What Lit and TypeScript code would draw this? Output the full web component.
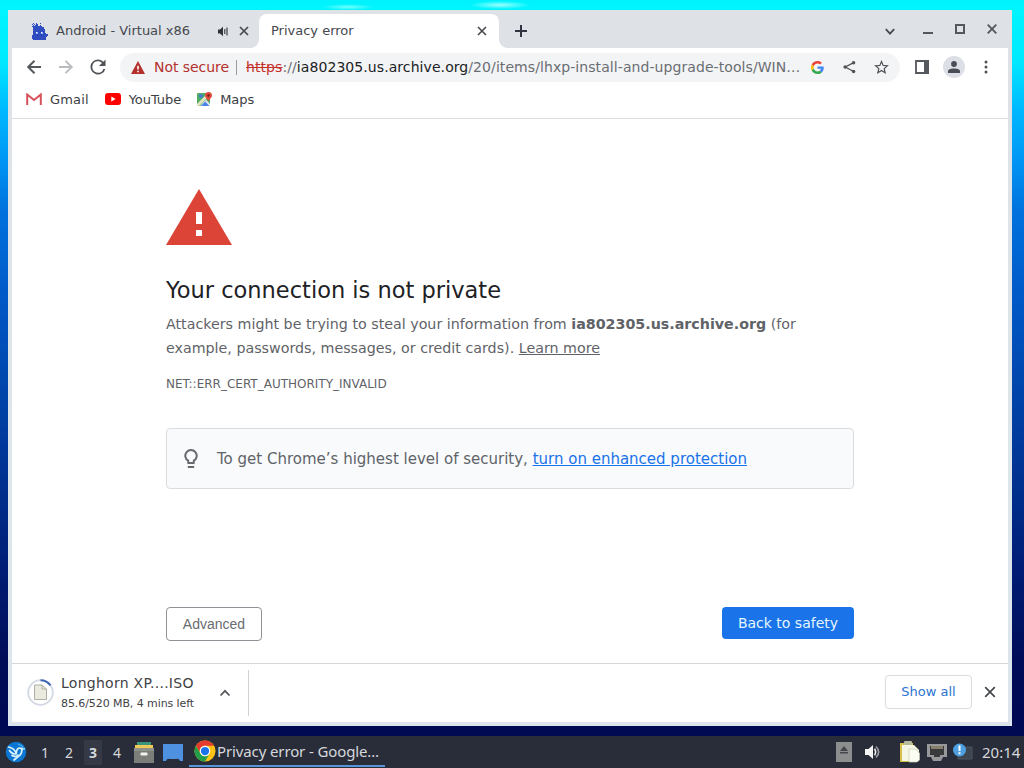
import { LitElement, html, css, svg } from "lit";
import { customElement } from "lit/decorators.js";

const closeGlyph = (size: number, weight: number) => html`<svg width=${size} height=${size} viewBox="0 0 10 10" fill="none" stroke="#45484c" stroke-width=${weight}><path d="M1 1L9 9M9 1L1 9" /></svg>`;

/* Favicon of the first tab, one string per pixel row. */
const droidRows = [
  "..b..b..b.......",
  ".b.b.bb.........",
  "..b.bbb.b.......",
  ".bbbbbbbbb......",
  "..bbbbbbbbbb....",
  "..bbbbbbbbbb....",
  "..bbbbbbbbbbb...",
  "..bbbbbbbbbbb...",
  "..bbbwlbbwlbb...",
  "..bbbllbbllbbb..",
  "..bbbbbbbbbbbbbb",
  ".bbbbbdbbdbbbbbb",
  ".bbbbbbbbbbbbbb.",
  ".bbbbbbbbbbbbb..",
  ".bbbbbbbbbbbbb..",
  "..bbbbbbbbbbbb..",
];
const droidFill: Record<string, string> = { b: "#2f4dc0", w: "#ffffff", l: "#8fb4f5", d: "#1a2f88" };

const chromeLogo = html`<svg width="22" height="22" viewBox="0 0 48 48">
  <circle cx="24" cy="24" r="23" fill="#fbc116" />
  <path d="M4.1 12.5A23 23 0 0 1 43.9 12.5H24A11.5 11.5 0 0 0 14 29.7Z" fill="#e33b2e" />
  <path d="M4.1 12.5A23 23 0 0 0 24 47L34 29.7A11.5 11.5 0 0 1 14 29.7Z" fill="#229e4b" />
  <circle cx="24" cy="24" r="11.5" fill="#fff" /><circle cx="24" cy="24" r="9" fill="#1a73e8" />
</svg>`;

@customElement("tab-strip")
export class TabStrip extends LitElement {
  static styles = css`
    :host { display: flex; height: 38px; background: #dee1e6; color: #45484c; font-size: 13px; }
    svg { display: block; flex: none; }
    .tab { display: flex; align-items: center; height: 34px; margin-top: 4px; box-sizing: border-box; }
    .idle { width: 251px; padding-left: 23px; }
    .idle .name { width: 161px; margin-left: 8px; }
    .idle .snd { margin-right: 10px; }
    .live { width: 240px; background: #fff; border-radius: 8px 8px 0 0; padding: 0 12px 0 12px; justify-content: space-between; position: relative; }
    .live::before, .live::after { content: ""; position: absolute; bottom: 0; width: 8px; height: 8px; }
    .live::before { left: -8px; background: radial-gradient(circle at 0 0, transparent 7.5px, #fff 8px); }
    .live::after { right: -8px; background: radial-gradient(circle at 100% 0, transparent 7.5px, #fff 8px); }
    .name { white-space: nowrap; line-height: 18px; padding-bottom: 1px; }
    .plus { margin: 15px 0 0 16px; }
    .win { display: flex; margin: 13px 15px 0 auto; align-items: center; height: 14px; }
    .min { margin: 6px 22px 0 0; }
    .down { margin: 3px 28px 0 0; }
    .max { margin: -2px 22px 0 0; }
    .quit { margin-top: -2px; }
  `;
  render() {
    return html`
      <div class="tab idle">
        <svg width="17" height="17" viewBox="0 0 16 16" shape-rendering="crispEdges">
          ${droidRows.map((row, y) => [...row].map((c, x) => c === "." ? null : svg`<rect x=${x} y=${y} width="1.05" height="1.05" fill=${droidFill[c]} />`))}
        </svg>
        <span class="name">Android - Virtual x86</span>
        <svg class="snd" width="12" height="11" viewBox="0 0 12 11"><path d="M1 3.5H3L6 .8V10.2L3 7.5H1Z" fill="#303338" /><path d="M7.8 3V8M10 1.5V9.5" stroke="#303338" stroke-width="1.1" /></svg>
        ${closeGlyph(10, 1.7)}
      </div>
      <div class="tab live"><span class="name">Privacy error</span>${closeGlyph(10, 1.6)}</div>
      <svg class="plus" width="12" height="12" viewBox="0 0 12 12"><path d="M6 0V12M0 6H12" stroke="#303440" stroke-width="2" /></svg>
      <div class="win">
        <svg class="down" width="10" height="8" viewBox="0 0 10 8"><path d="M.8 1.2L5 5.6L9.2 1.2" fill="none" stroke="#45484c" stroke-width="1.8" /></svg>
        <svg class="min" width="10" height="2"><rect width="10" height="2" fill="#55585e" /></svg>
        <svg class="max" width="10" height="10"><rect x="1" y="1" width="8" height="8" fill="none" stroke="#55585e" stroke-width="2" /></svg>
        <svg class="quit" width="10" height="10" viewBox="0 0 10 10"><path d="M.7 .7L9.3 9.3M9.3 .7L.7 9.3" stroke="#55585e" stroke-width="1.9" /></svg>
      </div>`;
  }
}

@customElement("nav-bar")
export class NavBar extends LitElement {
  static styles = css`
    :host { display: block; height: 71px; box-sizing: border-box; border-bottom: 1px solid #dadce0; background: #fff; margin: 0 4px; color: #3c4043; }
    svg { display: block; flex: none; }
    .row { display: flex; align-items: center; height: 38px; padding-left: 14px; }
    .gap { margin-left: 16px; }
    .omni { display: flex; align-items: center; width: 780px; height: 29px; border-radius: 15px; background: #f3f4f5; margin-left: 14px; padding-left: 11px; box-sizing: border-box; }
    .warn { color: #b3302c; font-size: 14px; width: 76px; margin-left: 9px; white-space: nowrap; letter-spacing: -0.05px; }
    .bar { width: 1px; height: 15px; background: #9a9da1; margin: 0 9px 0 6px; }
    .url { font-size: 14px; width: 554px; white-space: nowrap; color: #6a6e73; letter-spacing: 0.075px; }
    .url b { font-weight: 400; color: #202124; }
    .url s { color: #c5302b; }
    .goog { margin-left: 11px; }
    .share { margin-left: 19px; }
    .star { margin-left: 18px; }
    .side { margin-left: 15px; }
    .dots { margin-left: 19px; }
    .marks { display: flex; height: 26px; align-items: center; padding-left: 14px; font-size: 13px; }
    .marks span { margin-left: 8px; white-space: nowrap; }
    .gm { letter-spacing: .15px; }
    .yt, .mp { letter-spacing: -.05px; }
    .face { width: 22px; height: 22px; border-radius: 50%; background: #dcdfe6; display: grid; place-items: center; margin-left: 14px; }
  `;
  render() {
    return html`
      <div class="row">
        <svg width="16" height="16" viewBox="0 0 16 16" fill="none" stroke="#55585c" stroke-width="2"><path d="M15 8H2.2M8.5 1.8L2.2 8L8.5 14.2" /></svg>
        <svg class="gap" width="16" height="16" viewBox="0 0 16 16" fill="none" stroke="#b9bbbd" stroke-width="1.8"><path d="M1 8H13.8M7.5 1.8L13.8 8L7.5 14.2" /></svg>
        <svg class="gap" width="16" height="16" viewBox="3.5 3.5 17 17"><path fill="#505357" d="M17.65 6.35A7.96 7.96 0 0 0 12 4a8 8 0 1 0 7.73 10h-2.08A6 6 0 1 1 12 6c1.66 0 3.14.69 4.22 1.78L13 11h7V4z" /></svg>
        <div class="omni">
          <svg width="14" height="13" viewBox="0 0 14 13"><path d="M7 0L14 13H0Z" fill="#b3302c" /><path d="M6.2 4.8H7.8V8.6H6.2ZM6.2 9.7H7.8V11.3H6.2Z" fill="#fff" /></svg>
          <span class="warn">Not secure</span><i class="bar"></i>
          <span class="url"><s>https</s>://<b>ia802305.us.archive.org</b>/20/items/lhxp-install-and-upgrade-tools/WIN…</span>
          <svg class="goog" width="13" height="13" viewBox="0 0 48 48"><path fill="#EA4335" d="M24 9.5c3.54 0 6.71 1.22 9.21 3.6l6.85-6.85C35.9 2.38 30.47 0 24 0 14.62 0 6.51 5.38 2.56 13.22l7.98 6.19C12.43 13.72 17.74 9.5 24 9.5z"/><path fill="#4285F4" d="M46.98 24.55c0-1.57-.15-3.09-.38-4.55H24v9.02h12.94c-.58 2.96-2.26 5.48-4.78 7.18l7.73 6c4.51-4.18 7.09-10.36 7.09-17.65z"/><path fill="#FBBC05" d="M10.53 28.59c-.48-1.45-.76-2.99-.76-4.59s.27-3.14.76-4.59l-7.98-6.19C.92 16.46 0 20.12 0 24c0 3.88.92 7.54 2.56 10.78l7.97-6.19z"/><path fill="#34A853" d="M24 48c6.48 0 11.93-2.13 15.89-5.81l-7.73-6c-2.15 1.45-4.92 2.3-8.16 2.3-6.26 0-11.57-4.22-13.47-9.91l-7.98 6.19C6.51 42.62 14.62 48 24 48z"/></svg>
          <svg class="share" width="13" height="14" viewBox="0 0 14 14"><path d="M11 2.6L2.5 7L11 11.6" fill="none" stroke="#505357" stroke-width="1.4" /><g fill="#505357"><circle cx="11.4" cy="2.4" r="1.9" /><circle cx="2.3" cy="7" r="1.9" /><circle cx="11.4" cy="11.8" r="1.9" /></g></svg>
          <svg class="star" width="15" height="14" viewBox="2 2 20 19"><path fill="#4d5054" d="M22 9.24l-7.19-.62L12 2 9.19 8.63 2 9.24l5.46 4.73L5.82 21 12 17.27 18.18 21l-1.63-7.03L22 9.24zM12 15.4l-3.76 2.27 1-4.28-3.32-2.88 4.38-.38L12 6.1l1.71 4.04 4.38.38-3.32 2.88 1 4.28L12 15.4z" /></svg>
        </div>
        <svg class="side" width="14" height="14"><path d="M1 1H13V13H1Z" fill="none" stroke="#55585c" stroke-width="1.8" /><rect x="9" width="5" height="14" fill="#55585c" /></svg>
        <div class="face"><svg width="12" height="12"><circle cx="6" cy="3" r="2.9" fill="#4a4d58" /><path d="M0 12V10C0 6.6 12 6.6 12 10V12Z" fill="#4a4d58" /></svg></div>
        <svg class="dots" width="4" height="14" fill="#505357"><circle cx="2" cy="2" r="1.5" /><circle cx="2" cy="7" r="1.5" /><circle cx="2" cy="12" r="1.5" /></svg>
      </div>
      <div class="marks">
        <svg width="16" height="12" viewBox="0 0 16 12"><path d="M1.2 12V1.5L8 7L14.8 1.5V12" fill="none" stroke="#d5505a" stroke-width="2" /></svg><span class="gm">Gmail</span>
        <svg class="gap" width="16" height="12"><rect width="16" height="12" rx="3" fill="#f00" /><path d="M6.3 3.4L10.6 6L6.3 8.6Z" fill="#fff" /></svg><span class="yt">YouTube</span>
        <svg class="gap" width="15" height="15" viewBox="0 0 15 15"><rect y="1" width="13" height="13" rx="1" fill="#4fae62" /><path d="M3 14L9 7.5L13 12V14Z" fill="#dfe5ee" /><path d="M0 12L9 3L11 5L2 14H0Z" fill="#e7e3c4" /><path d="M4 14L8.2 9.6L12.3 14Z" fill="#4a83e6" /><path d="M2 2.5H6V4A2 2 0 1 1 2 4Z" fill="#4577d5" /><path d="M11.5 10C11 7 8 6 8 3.5A3.5 3.5 0 0 1 15 3.5C15 6 12 7 11.5 10Z" fill="#dd4b3e" /><circle cx="11.5" cy="3.5" r="1.2" fill="#7c1c17" /></svg><span class="mp">Maps</span>
      </div>`;
  }
}

@customElement("warning-page")
export class WarningPage extends LitElement {
  static styles = css`
    :host { display: flex; flex-direction: column; box-sizing: border-box; height: 544px; margin: 0 4px; padding: 70px 154px 0; background: #fff; color: #5f6368; }
    svg { display: block; flex: none; }
    h1 { font-size: 22.5px; line-height: 28px; font-weight: 400; color: #202124; margin: 31px 0 8px; white-space: nowrap; }
    p { margin: 0; font-size: 14.25px; line-height: 24px; white-space: nowrap; }
    .code { font-size: 12px; line-height: 18px; margin: 15px 0 35px; white-space: nowrap; }
    .tip { display: flex; align-items: center; box-sizing: border-box; height: 61px; border: 1px solid #dadce0; border-radius: 4px; background: #f8fafc; padding-left: 17px; font-size: 15px; }
    .tip span { margin-left: 19px; white-space: nowrap; }
    .tip u { color: #1a73e8; }
    .acts { display: flex; justify-content: space-between; margin-top: 118px; }
    button { box-sizing: border-box; border-radius: 4px; font-size: 14px; padding: 0; white-space: nowrap; }
    .adv { width: 96px; height: 34px; border: 1px solid #8f9296; background: #fff; color: #696c70; font-family: "Liberation Sans", sans-serif; }
    .safe { width: 132px; height: 32px; border: 0; background: #1a73e8; color: #e4f7fd; font-family: "DejaVu Sans", sans-serif; }
  `;
  render() {
    return html`
      <svg width="66" height="56" viewBox="0 0 66 56"><path d="M33 0L66 56H0Z" fill="#db4437" /><path d="M30 23H36V35H30ZM30 41H36V47H30Z" fill="#fff" /></svg>
      <h1>Your connection is not private</h1>
      <p>Attackers might be trying to steal your information from <b>ia802305.us.archive.org</b> (for<br />example, passwords, messages, or credit cards). <u>Learn more</u></p>
      <div class="code">NET::ERR_CERT_AUTHORITY_INVALID</div>
      <div class="tip">
        <svg width="14" height="20" viewBox="0 0 14 20"><path d="M4.2 14V11.7A5.7 5.7 0 1 1 9.8 11.7V14Z" fill="none" stroke="#666a6f" stroke-width="2" stroke-linejoin="round" /><path d="M3.8 18H10.2" stroke="#666a6f" stroke-width="2" /></svg>
        <span>To get Chrome’s highest level of security, <u>turn on enhanced protection</u></span>
      </div>
      <div class="acts"><button class="adv">Advanced</button><button class="safe">Back to safety</button></div>`;
  }
}

@customElement("download-shelf")
export class DownloadShelf extends LitElement {
  static styles = css`
    :host { display: flex; align-items: center; box-sizing: border-box; height: 59px; border-top: 1px solid #d5d7da; margin: 0 4px; padding: 0 12px 0 15px; background: #fff; color: #3f4246; }
    svg { display: block; flex: none; }
    .ring { margin-bottom: 2px; }
    .txt { width: 158px; margin-left: 7px; white-space: nowrap; }
    .name { font-size: 14px; line-height: 18px; letter-spacing: .27px; margin-top: -1px; }
    .size { font-size: 11px; line-height: 16px; margin-top: 4px; letter-spacing: -.08px; }
    .rule { width: 1px; height: 46px; background: #cfd1d4; margin-left: 17px; }
    .all { display: grid; place-items: center; box-sizing: border-box; width: 87px; height: 34px; border: 1px solid #dadce0; border-radius: 4px; color: #2c74cf; font-size: 13px; margin: 0 12px 2px auto; padding-bottom: 1px; }
    .shut { margin-bottom: 2px; }
  `;
  render() {
    return html`
      <svg class="ring" width="27" height="27" viewBox="0 0 27 27" fill="none"><circle cx="13.5" cy="13.5" r="12.3" stroke="#d3d8e4" stroke-width="1.8" /><path d="M13.5 1.2A12.3 12.3 0 0 1 23.5 6.3" stroke="#4067b5" stroke-width="2" /><path d="M7.5 6H15L19.5 10V20.5H7.5Z" fill="#ebeade" stroke="#aeb0a5" /><path d="M15 6V10H19.5" stroke="#aeb0a5" /></svg>
      <div class="txt"><div class="name">Longhorn XP....ISO</div><div class="size">85.6/520 MB, 4 mins left</div></div>
      <svg width="12" height="8" viewBox="0 0 12 8" fill="none" stroke="#55585c" stroke-width="1.8"><path d="M1.5 6.5L6 1.8L10.5 6.5" /></svg>
      <i class="rule"></i>
      <div class="all">Show all</div>
      <div class="shut">${closeGlyph(12, 1.4)}</div>`;
  }
}

@customElement("task-bar")
export class TaskBar extends LitElement {
  static styles = css`
    :host { display: flex; align-items: center; height: 32px; background: #292d39; color: #d6d8dc; font: 15px "Noto Sans", sans-serif; }
    svg { display: block; flex: none; }
    .logo { margin-left: 5px; margin-right: 6px; }
    .desk { width: 24px; text-align: center; font-size: 14px; line-height: 32px; padding-top: 1px; }
    .on { width: 18px; margin: 0 3px; line-height: 24px; background: #353945; font-weight: 700; }
    .files { margin-left: 5px; }
    .screen { margin-left: 9px; }
    .task { display: flex; align-items: center; box-sizing: border-box; width: 196px; height: 30px; border-bottom: 2px solid #5795d8; padding-left: 5px; margin-left: 6px; white-space: nowrap; letter-spacing: -.12px; }
    .task span { margin-left: 1px; }
    .tray { display: flex; align-items: center; margin-left: auto; padding-right: 4px; }
    .vol { margin-left: 12px; }
    .clip { margin-left: 19px; }
    .net { margin-left: 7px; }
    .note { margin-left: 6px; }
    .clock { margin-left: 9px; width: 38px; white-space: nowrap; }
  `;
  render() {
    return html`
      <svg class="logo" width="22" height="22" viewBox="0 0 22 22"><circle cx="11" cy="11" r="10.3" fill="#0b75d1" /><g fill="none" stroke="#d8f2fb" stroke-linecap="round" stroke-linejoin="round"><path d="M3.5 6C6.5 6.5 9.5 8.5 11.3 12M4.5 9.5C6 12 8 13 11 13M7 14.5C9 15.8 11.5 15.5 13 14" stroke-width="1.7" /><path d="M11.3 12C11.5 8 13 6.5 16.5 7.5L19 7.8M16.8 8.5C17 12 15.5 14.5 12.5 16L9 19" stroke-width="1.8" /></g><path d="M13 3Q18 4 19.3 9" stroke="#59b9ef" fill="none" /></svg>
      <span class="desk">1</span><span class="desk">2</span><span class="desk on">3</span><span class="desk">4</span>
      <svg class="files" width="20" height="21" viewBox="0 0 20 21"><path d="M3 0H17V3H3Z" fill="#37967c" /><path d="M1 3H19V6H1Z" fill="#f1c958" /><path d="M0 6H20V21H0Z" fill="#7c7e79" /><path d="M0 6H20V9H0Z" fill="#8e908a" /><rect x="6.5" y="10.5" width="7" height="3" rx="1" fill="#f3f4f1" /></svg>
      <svg class="screen" width="20" height="17"><path d="M0 0H20V17H17Q16 14 13 15H7Q4 14 3 17H0Z" fill="#4f91e1" /></svg>
      <div class="task">${chromeLogo}<span>Privacy error - Google…</span></div>
      <div class="tray">
        <svg width="16" height="20"><rect width="16" height="20" fill="#8c8d8d" /><path d="M8 4L12 9H4ZM4 10H12V11.5H4Z" fill="#43464b" /></svg>
        <svg class="vol" width="17" height="16" viewBox="0 0 17 16"><path d="M1 5H4.5L9 1V15L4.5 11H1Z" fill="#f4f4f4" /><path d="M10.5 4.8Q12.8 8 10.5 11.2" stroke="#f4f4f4" stroke-width="1.5" fill="none" /><path d="M12 2.5Q17.4 8 12 13.5" stroke="#9a9ca2" stroke-width="1.6" fill="none" /></svg>
        <svg class="clip" width="20" height="22" viewBox="0 0 20 22"><path d="M0 2H13V21H0Z" fill="#d6be48" /><path d="M2 4H14L19 9V20H2Z" fill="#f5f6e4" /><rect x="4" width="8" height="4" rx="1" fill="#b7bb9c" /><path d="M9 8H15L19.5 12V19L17 21H9Z" fill="#fbfcf2" stroke="#c9ccb3" stroke-width=".7" /></svg>
        <svg class="net" width="20" height="19" viewBox="0 0 20 19"><path d="M0 1H20V14H16L14 18H6L4 14H0Z" fill="#96989a" /><path d="M3 3H17V12H13V14H7V12H3Z" fill="#383a3b" /><path d="M5 3V6M7 3V6M9 3V6M11 3V6M13 3V6M15 3V6" stroke="#d7c69b" /></svg>
        <svg class="note" width="20" height="18" viewBox="0 0 20 18"><path d="M5 4H19V16H5Z" fill="#3d454f" stroke="#4e5660" /><circle cx="6.5" cy="7" r="6.5" fill="#4d9fe0" /><path d="M6.5 2.5V8M6.5 9.3V11.3" stroke="#fff" stroke-width="2" /></svg>
        <span class="clock">20:14</span>
      </div>`;
  }
}

@customElement("app-root")
export class AppRoot extends LitElement {
  static styles = css`
    :host { display: flex; flex-direction: column; width: 1024px; height: 768px; overflow: hidden; box-sizing: border-box; font-family: "DejaVu Sans", sans-serif; background: linear-gradient(#00f6ff 0, #00eaff 60px, #00b8ff 110px, #0096f5 160px, #0072de 210px, #0058c6 300px, #003c9f 430px, #001c74 570px, #000c58 660px, #000850 768px); }
    .sky { height: 10px; background: radial-gradient(ellipse 30px 4px at 500px 5px, #9cffff, transparent), radial-gradient(ellipse 26px 3px at 348px 7px, #70ffff, transparent), linear-gradient(#00f2fc, #00f6ff); }
    .window { margin: 0 12px 0 8px; height: 716px; background: linear-gradient(#dee1e6, #dde6ea 60%, #dce5ec); }
    task-bar { margin-top: 10px; }
  `;
  render() {
    return html`<div class="sky"></div>
      <div class="window"><tab-strip></tab-strip><nav-bar></nav-bar><warning-page></warning-page><download-shelf></download-shelf></div>
      <task-bar></task-bar>`;
  }
}
